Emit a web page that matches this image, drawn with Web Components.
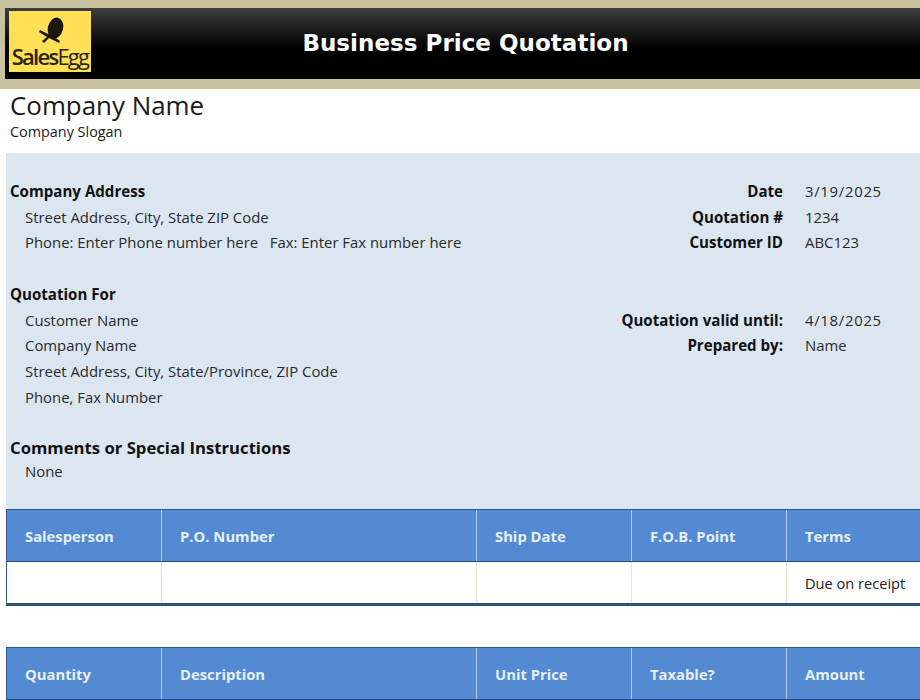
<!DOCTYPE html>
<html><head><meta charset="utf-8">
<style>
html,body{margin:0;padding:0;background:#fff;overflow:hidden}
body{width:920px;height:700px;font-family:"Open Sans","Liberation Sans",sans-serif;color:#1a1a1a}
</style></head><body>
<quote-banner title-text="Business Price Quotation"></quote-banner>
<company-head name="Company Name" slogan="Company Slogan"></company-head>
<info-panel></info-panel>
<quote-table cells="Salesperson|P.O. Number|Ship Date|F.O.B. Point|Terms" body="||||Due on receipt"></quote-table>
<quote-table class="second" cells="Quantity|Description|Unit Price|Taxable?|Amount"></quote-table>
<script>
class QuoteBanner extends HTMLElement{connectedCallback(){
 const r=this.attachShadow({mode:'open'});
 r.innerHTML=`<style>
 :host{display:block;background:#c9c2a0;padding:8px 0 10px 5px}
 .bar{height:71px;background:linear-gradient(#3d3d3d 0,#161616 26px,#000 42px);display:flex;align-items:center;padding:3px 0 7px 4px;box-sizing:border-box}
 .logo{width:82px;height:61px;background:#fedf55;display:flex;flex-direction:column;align-items:center;flex:none;overflow:hidden}
 svg{display:block;margin-top:5px}
 .w{font:400 22px/22px "Open Sans",sans-serif;letter-spacing:-1.75px;color:#2b2410;margin-top:-1px;white-space:nowrap}
 .w b{font-weight:600}
 h1{margin:0;flex:1;text-align:center;color:#fff;font:700 23px/30px "DejaVu Sans",sans-serif;letter-spacing:.03px;padding:2px 80px 0 0}
 </style><div class="bar"><div class="logo"><svg width="34" height="30" viewBox="0 0 34 30"><ellipse cx="22.5" cy="12" rx="7.6" ry="10.6" transform="rotate(14 22.5 12)" fill="#1c170c"/><path fill="#1c170c" d="M7 14l10 5 3 1 7 5-1 2-8-4-2-1-5 5-2-2 5-4-8-5z"/></svg><div class="w"><b>Sales</b>Egg</div></div><h1>${this.getAttribute('title-text')}</h1></div>`;
}}
class CompanyHead extends HTMLElement{connectedCallback(){
 const r=this.attachShadow({mode:'open'});
 r.innerHTML=`<style>
 :host{display:block;height:64px;padding-left:10px;box-sizing:border-box}
 .n{font-size:25.9px;line-height:33px}
 .s{font-size:14.4px;line-height:20px}
 </style><div class="n">${this.getAttribute('name')}</div><div class="s">${this.getAttribute('slogan')}</div>`;
}}
class InfoPanel extends HTMLElement{connectedCallback(){
 const r=this.attachShadow({mode:'open'});
 const rows=[
  ['<b>Company Address</b>','Date','<span class="d">3/19/2025</span>'],
  ['<i>Street Address, City, State ZIP Code</i>','Quotation #','1234'],
  ['<i>Phone: Enter Phone number here&nbsp;&nbsp; Fax: Enter Fax number here</i>','Customer ID','ABC123'],
  ['','',''],
  ['<b>Quotation For</b>','',''],
  ['<i>Customer Name</i>','Quotation valid until:','<span class="d">4/18/2025</span>'],
  ['<i>Company Name</i>','Prepared by:','Name'],
  ['<i>Street Address, City, State/Province, ZIP Code</i>','',''],
  ['<i>Phone, Fax Number</i>','','']];
 r.innerHTML=`<style>
 :host{display:block;margin-left:6px;height:356px;background:#dce6f1;box-sizing:border-box;padding:25px 0 0 4px;font-size:14.9px}
 .g{display:grid;grid-template-columns:1fr auto 115px;column-gap:22px;grid-auto-rows:25.75px;align-items:center}
 b,.l{font-weight:700;color:#111;font-size:15.1px}
 i{font-style:normal;padding-left:15px;color:#2a2a2a}
 .l{text-align:right}
 .v{color:#2a2a2a}
 .d{letter-spacing:.7px}
 h2{margin:25px 0 0;font-size:16.7px;line-height:26px;font-weight:700;color:#111}
 p{margin:0;padding-left:15px;line-height:21px;color:#2a2a2a}
 </style><div class="g">${rows.map(x=>`<div>${x[0]||'&nbsp;'}</div><div class="l">${x[1]}</div><div class="v">${x[2]}</div>`).join('')}</div>
 <h2>Comments or Special Instructions</h2><p>None</p>`;
}}
class QuoteTable extends HTMLElement{connectedCallback(){
 const r=this.attachShadow({mode:'open'});
 const c=this.getAttribute('cells').split('|');
 const bAttr=this.getAttribute('body');
 const cols='154px 315px 155px 155px 134px';
 r.innerHTML=`<style>
 :host{display:block;margin-left:6px;font-size:14.6px}
 :host(.second){margin-top:41px}
 .h,.b{display:grid;grid-template-columns:${cols}}
 .h{height:53px;background:#538ad3;border-top:1px solid #2b5a8c;border-bottom:1px solid #24507f;box-sizing:border-box;border-left:1px solid #2b5a8c}
 .h div{display:flex;align-items:center;padding-left:18px;color:#e6f0fb;font-weight:700;font-size:14.8px}
 .h div+div{border-left:1px solid #b5cbe8}
 .b{height:44px;box-sizing:border-box;border-bottom:3px solid #2d5478;border-left:1px solid #2b5a8c;background:#fff}
 .b div{display:flex;align-items:center;padding:1px 0 0 18px;border-left:1px solid #e6e3d4;color:#222}
 .b div:first-child{border-left:0}
 </style><div class="h">${c.map(t=>`<div>${t}</div>`).join('')}</div>${bAttr!==null?`<div class="b">${bAttr.split('|').map(t=>`<div>${t}</div>`).join('')}</div>`:''}`;
}}
customElements.define('quote-banner',QuoteBanner);
customElements.define('company-head',CompanyHead);
customElements.define('info-panel',InfoPanel);
customElements.define('quote-table',QuoteTable);
</script>
</body></html>
